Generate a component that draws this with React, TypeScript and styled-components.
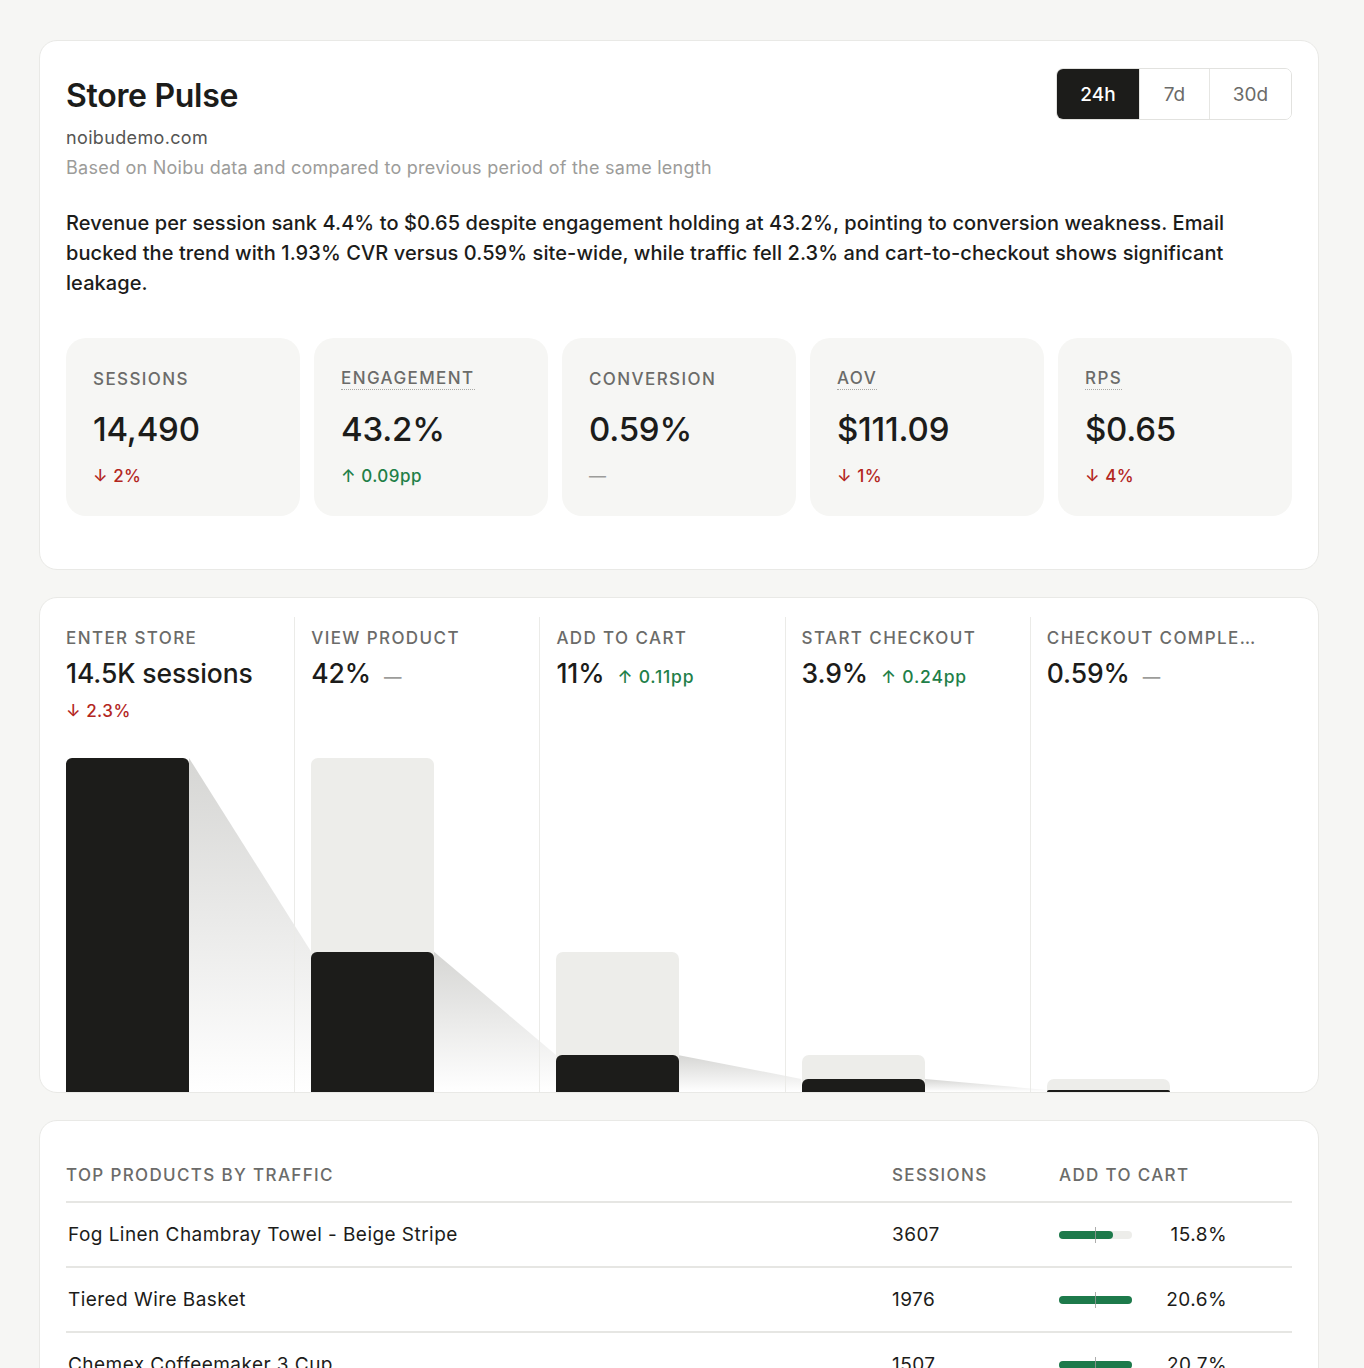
import styled, { createGlobalStyle } from "styled-components";

type Dir = "up" | "down";
type Delta = { dir: Dir; text: string } | null;

const metrics: { label: string; value: string; delta: Delta; hint?: boolean }[] = [
  { label: "Sessions", value: "14,490", delta: { dir: "down", text: "2%" } },
  { label: "Engagement", value: "43.2%", delta: { dir: "up", text: "0.09pp" }, hint: true },
  { label: "Conversion", value: "0.59%", delta: null },
  { label: "AOV", value: "$111.09", delta: { dir: "down", text: "1%" }, hint: true },
  { label: "RPS", value: "$0.65", delta: { dir: "down", text: "4%" }, hint: true },
];

const steps: { label: string; value: string; share: number; delta: Delta; below?: boolean }[] = [
  { label: "Enter store", value: "14.5K sessions", share: 1, delta: { dir: "down", text: "2.3%" }, below: true },
  { label: "View product", value: "42%", share: 0.42, delta: null },
  { label: "Add to cart", value: "11%", share: 0.11, delta: { dir: "up", text: "0.11pp" } },
  { label: "Start checkout", value: "3.9%", share: 0.039, delta: { dir: "up", text: "0.24pp" } },
  { label: "Checkout completed", value: "0.59%", share: 0.0059, delta: null },
];

const products = [
  { name: "Fog Linen Chambray Towel - Beige Stripe", sessions: 3607, atc: "15.8%", fill: 0.74 },
  { name: "Tiered Wire Basket", sessions: 1976, atc: "20.6%", fill: 1 },
  { name: "Chemex Coffeemaker 3 Cup", sessions: 1507, atc: "20.7%", fill: 1 },
];

const CHART_H = 334;

const GlobalStyle = createGlobalStyle`
  body {
    margin: 0;
    background: #f6f6f4;
    font-family: Inter, "Noto Sans", sans-serif;
    color: #1c1c1a;
    -webkit-font-smoothing: antialiased;
  }
`;

const Page = styled.main`
  display: flex;
  flex-direction: column;
  gap: 27px;
  padding: 40px 45px 40px 39px;
`;

const Card = styled.section<{ $pad: string }>`
  background: #fff;
  border: 1px solid #e9e9e6;
  border-radius: 18px;
  padding: ${(p) => p.$pad};
  overflow: hidden;
`;

const Header = styled.div`
  display: flex;
  justify-content: space-between;
  align-items: flex-start;
`;

const Intro = styled.div`
  padding-top: 2px;
`;

const Title = styled.h1`
  margin: 0;
  font-size: 32px;
  line-height: 52px;
  font-weight: 600;
  letter-spacing: -0.3px;
`;

const Domain = styled.div`
  margin-top: 4px;
  font-size: 18px;
  line-height: 24px;
  letter-spacing: 0.35px;
  color: #555553;
`;

const Note = styled.div`
  margin-top: 6px;
  font-size: 18px;
  line-height: 24px;
  letter-spacing: 0.25px;
  color: #9c9c9a;
`;

const Segmented = styled.div`
  display: flex;
  border: 1px solid #e2e2df;
  border-radius: 7px;
  overflow: hidden;
`;

const Segment = styled.button<{ $active?: boolean; $w: number }>`
  width: ${(p) => p.$w}px;
  height: 50px;
  border: 0;
  border-left: 1px solid ${(p) => (p.$active ? "#1c1c1a" : "#e6e6e3")};
  &:first-child {
    border-left: 0;
  }
  background: ${(p) => (p.$active ? "#1c1c1a" : "#fff")};
  color: ${(p) => (p.$active ? "#fff" : "#6b6b69")};
  font-family: inherit;
  font-size: 19px;
  font-weight: ${(p) => (p.$active ? 500 : 400)};
  padding: 0;
`;

const Summary = styled.p`
  margin: 28px 0 0;
  font-size: 20px;
  line-height: 30px;
  font-weight: 500;
  letter-spacing: 0.08px;
  color: #1c1c1a;
`;

const MetricGrid = styled.div`
  display: grid;
  grid-template-columns: repeat(5, minmax(0, 1fr));
  gap: 14px;
  margin-top: 40px;
`;

const MetricCard = styled.div`
  background: #f6f6f4;
  border-radius: 20px;
  padding: 30px 27px 29px;
  display: flex;
  flex-direction: column;
  align-items: flex-start;
`;

const Label = styled.span<{ $hint?: boolean }>`
  font-size: 17px;
  line-height: 22px;
  font-weight: 500;
  letter-spacing: 1.4px;
  text-transform: uppercase;
  color: #6b6b69;
  ${(p) =>
    p.$hint &&
    `border-bottom: 1.5px dotted #a9a9a6; line-height: 20px; padding-bottom: 1px;`}
`;

const MetricValue = styled.div`
  margin-top: 19px;
  font-size: 33px;
  line-height: 40px;
  font-weight: 500;
  letter-spacing: -0.2px;
`;

const Change = styled.span<{ $dir?: Dir }>`
  font-size: 17px;
  line-height: 22px;
  font-weight: 500;
  letter-spacing: 0.5px;
  color: ${(p) => (p.$dir === "up" ? "#1f8049" : p.$dir === "down" ? "#b3261e" : "#9c9c9a")};
  white-space: nowrap;
`;

const MetricChange = styled(Change)`
  margin-top: 16px;
`;

const Funnel = styled.div`
  display: grid;
  grid-template-columns: repeat(5, minmax(0, 1fr));
`;

const Step = styled.div`
  position: relative;
  display: flex;
  flex-direction: column;
  min-width: 0;
  &:not(:first-child)::before {
    content: "";
    position: absolute;
    left: -17px;
    top: 0;
    bottom: 0;
    width: 1px;
    background: #ebebe8;
  }
`;

const StepHead = styled.div`
  height: 141px;
  box-sizing: border-box;
  padding: 10px 36px 0 0;
  display: flex;
  flex-direction: column;
  gap: 8px;
  min-width: 0;
`;

const StepLabel = styled(Label)`
  display: block;
  white-space: nowrap;
  overflow: hidden;
  text-overflow: ellipsis;
`;

const StepValueRow = styled.div`
  display: flex;
  align-items: baseline;
  gap: 13px;
`;

const StepValue = styled.span`
  font-size: 26.5px;
  line-height: 32px;
  font-weight: 500;
  letter-spacing: -0.1px;
`;

const StepDelta = styled(Change)`
  font-size: 17.5px;
  letter-spacing: 0.8px;
`;

const StepChange = styled(Change)`
  margin-top: 3px;
`;

const ChartRow = styled.div`
  display: flex;
  height: ${CHART_H}px;
`;

const BarSlot = styled.div`
  width: 123px;
  flex: none;
  display: flex;
  align-items: flex-end;
`;

const Track = styled.div`
  width: 100%;
  background: #ededea;
  border-radius: 7px 7px 0 0;
  display: flex;
  align-items: flex-end;
`;

const Fill = styled.div`
  width: 100%;
  background: #1c1c1a;
  border-radius: 6px 6px 0 0;
`;

const Connector = styled.svg`
  flex: 1;
  height: 100%;
  display: block;
`;

const Table = styled.table`
  width: 100%;
  border-collapse: collapse;
`;

const Th = styled.th<{ $w?: number }>`
  text-align: left;
  font-size: 17px;
  line-height: 22px;
  font-weight: 500;
  letter-spacing: 1.35px;
  color: #6b6b69;
  padding: 16px 0 15px;
  border-bottom: 2px solid #e6e6e3;
  ${(p) => p.$w && `width: ${p.$w}px;`}
`;

const Td = styled.td<{ $indent?: boolean }>`
  font-size: 19px;
  line-height: 23px;
  letter-spacing: 0.45px;
  color: #1c1c1a;
  padding: 20px 0 20px ${(p) => (p.$indent ? "2px" : "0")};
  border-bottom: 2px solid #e6e6e3;
`;

const AtcCell = styled.div`
  display: flex;
  align-items: center;
`;

const Meter = styled.div`
  position: relative;
  width: 73px;
  height: 8px;
  border-radius: 4px;
  background: #ededea;
`;

const MeterFill = styled.div`
  height: 100%;
  border-radius: 4px;
  background: #1d7a4b;
`;

const MeterMark = styled.span`
  position: absolute;
  left: 36px;
  top: -4px;
  width: 1px;
  height: 16px;
  background: #9a9a98;
  opacity: 0.8;
`;

const Pct = styled.span`
  width: 95px;
  text-align: right;
`;

const Arrow = ({ dir }: { dir: Dir }) => <>{dir === "up" ? "↑" : "↓"}&nbsp;</>;

const ChangeText = ({ delta }: { delta: Delta }) =>
  delta ? (
    <>
      <Arrow dir={delta.dir} />
      {delta.text}
    </>
  ) : (
    <>—</>
  );

const StepChart = ({ index }: { index: number }) => {
  const cur = steps[index];
  const prev = steps[index - 1];
  const next = steps[index + 1];
  const h = Math.max(cur.share * CHART_H, 2);
  const trackH = prev ? prev.share * CHART_H : h;
  const id = `funnel-fade-${index}`;
  return (
    <ChartRow>
      <BarSlot>
        <Track style={{ height: trackH, background: prev ? undefined : "transparent" }}>
          <Fill style={{ height: h }} />
        </Track>
      </BarSlot>
      {next && (
        <Connector viewBox={`0 0 100 ${CHART_H}`} preserveAspectRatio="none">
          <defs>
            <linearGradient id={id} x1="0" y1="0" x2="0" y2="1">
              <stop offset="0" stopColor="#d6d6d4" />
              <stop offset="1" stopColor="#ffffff" />
            </linearGradient>
          </defs>
          <polygon
            points={`0,${CHART_H - h} 100,${CHART_H - Math.max(next.share * CHART_H, 2)} 100,${CHART_H} 0,${CHART_H}`}
            fill={`url(#${id})`}
          />
        </Connector>
      )}
    </ChartRow>
  );
};

export default function App() {
  return (
    <>
      <GlobalStyle />
      <Page>
        <Card $pad="27px 26px 53px">
          <Header>
            <Intro>
              <Title>Store Pulse</Title>
              <Domain>noibudemo.com</Domain>
              <Note>Based on Noibu data and compared to previous period of the same length</Note>
            </Intro>
            <Segmented>
              <Segment $active $w={82}>24h</Segment>
              <Segment $w={70}>7d</Segment>
              <Segment $w={82}>30d</Segment>
            </Segmented>
          </Header>
          <Summary>
            Revenue per session sank 4.4% to $0.65 despite engagement holding at 43.2%, pointing to
            conversion weakness. Email bucked the trend with 1.93% CVR versus 0.59% site-wide, while
            traffic fell 2.3% and cart-to-checkout shows significant leakage.
          </Summary>
          <MetricGrid>
            {metrics.map((m) => (
              <MetricCard key={m.label}>
                <Label $hint={m.hint}>{m.label}</Label>
                <MetricValue>{m.value}</MetricValue>
                <MetricChange $dir={m.delta?.dir}>
                  <ChangeText delta={m.delta} />
                </MetricChange>
              </MetricCard>
            ))}
          </MetricGrid>
        </Card>

        <Card $pad="19px 26px 0">
          <Funnel>
            {steps.map((s, i) => (
              <Step key={s.label}>
                <StepHead>
                  <StepLabel>{s.label}</StepLabel>
                  <StepValueRow>
                    <StepValue>{s.value}</StepValue>
                    {!s.below && (
                      <StepDelta $dir={s.delta?.dir}>
                        <ChangeText delta={s.delta} />
                      </StepDelta>
                    )}
                  </StepValueRow>
                  {s.below && (
                    <StepChange $dir={s.delta?.dir}>
                      <ChangeText delta={s.delta} />
                    </StepChange>
                  )}
                </StepHead>
                <StepChart index={i} />
              </Step>
            ))}
          </Funnel>
        </Card>

        <Card $pad="27px 26px 53px">
          <Table>
            <thead>
              <tr>
                <Th>TOP PRODUCTS BY TRAFFIC</Th>
                <Th $w={167}>SESSIONS</Th>
                <Th $w={233}>ADD TO CART</Th>
              </tr>
            </thead>
            <tbody>
              {products.map((p) => (
                <tr key={p.name}>
                  <Td $indent>{p.name}</Td>
                  <Td>{p.sessions}</Td>
                  <Td>
                    <AtcCell>
                      <Meter>
                        <MeterFill style={{ width: `${p.fill * 100}%` }} />
                        <MeterMark />
                      </Meter>
                      <Pct>{p.atc}</Pct>
                    </AtcCell>
                  </Td>
                </tr>
              ))}
            </tbody>
          </Table>
        </Card>
      </Page>
    </>
  );
}
